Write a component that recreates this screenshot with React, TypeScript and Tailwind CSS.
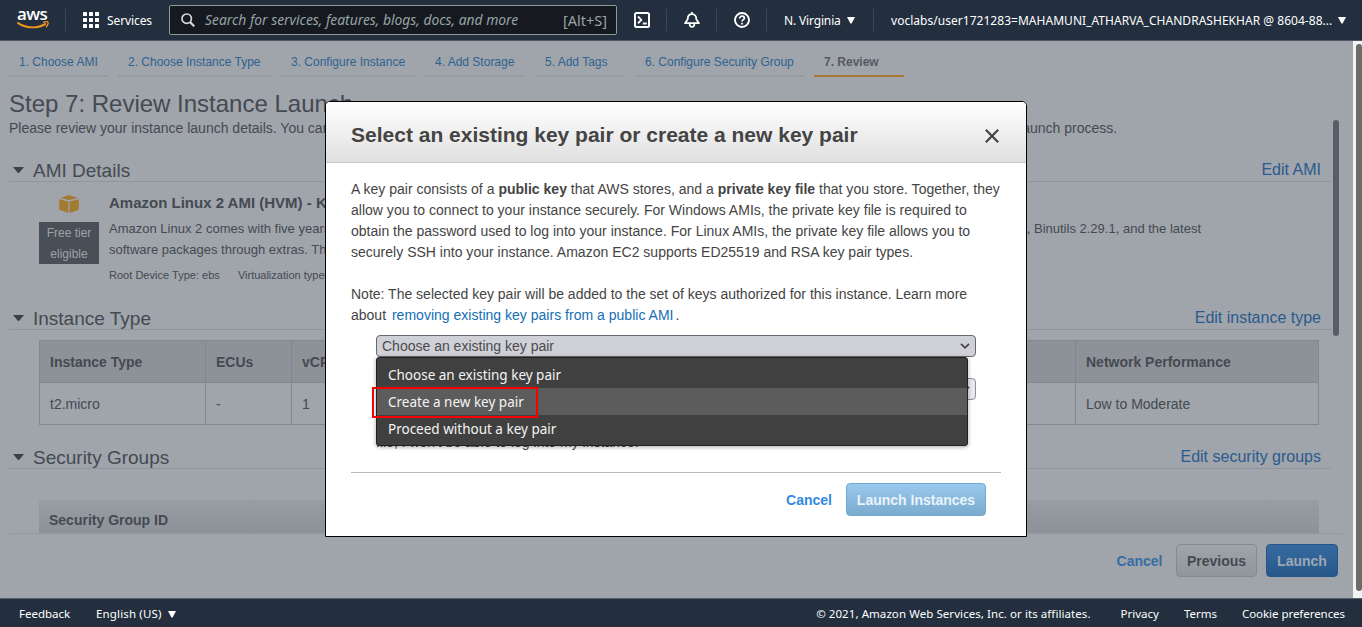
import type { ReactNode } from 'react';

const tabs = [
  { label: '1. Choose AMI', width: 'w-[99px]' },
  { label: '2. Choose Instance Type', width: 'w-[153px]' },
  { label: '3. Configure Instance', width: 'w-[134px]' },
  { label: '4. Add Storage', width: 'w-[100px]' },
  { label: '5. Add Tags', width: 'w-[90px]' },
  { label: '6. Configure Security Group', width: 'w-[169px]' },
];

const columns = [
  { head: 'Instance Type', value: 't2.micro', width: 'w-[166px]' },
  { head: 'ECUs', value: '-', width: 'w-[86px]' },
  { head: 'vCPUs', value: '1', width: 'w-[97px]' },
  { head: 'Memory (GiB)', value: '1', width: 'w-[143px]' },
  { head: 'Instance Storage (GB)', value: 'EBS only', width: 'w-[272px]' },
  { head: 'EBS-Optimized Available', value: '-', width: 'w-[272px]' },
  { head: 'Network Performance', value: 'Low to Moderate', width: 'w-[243px]' },
];

function Caret() {
  return (
    <svg width="8" height="7" viewBox="0 0 8 7" className="shrink-0">
      <path d="M0 0h8L4.6 6.5H3.4z" fill="#fff" />
    </svg>
  );
}

function Divider() {
  return <span className="h-[22px] w-px shrink-0 bg-[#3d4652]" />;
}

function Logo() {
  return (
    <div className="relative h-[22px] w-8 shrink-0">
      <span className="absolute -top-[6px] left-0 font-['Open_Sans',sans-serif] text-[17px] leading-[22px] font-semibold tracking-[-0.6px] text-white">
        aws
      </span>
      <svg width="32" height="22" viewBox="0 0 32 22" className="absolute top-0 left-0" fill="none">
        <path d="M.4 13.6c8.200 6 20.200 6.400 28.500 1" stroke="#f7981f" strokeWidth="1.9" />
        <path d="M26.2 13.4c2.200-.7 4.300-.7 4.700-.2.400.8-.3 3.300-1.800 5" stroke="#f7981f" strokeWidth="1.3" />
      </svg>
    </div>
  );
}

function TopBar() {
  return (
    <header className="flex h-[41px] shrink-0 items-center border-b border-[#4d5763] bg-[#232f3e] font-['Noto_Sans',sans-serif] text-[12px] whitespace-nowrap text-white">
      <div className="flex w-[65px] shrink-0 pl-[17px]">
        <Logo />
      </div>
      <Divider />
      <div className="flex w-[103px] shrink-0 items-center pl-[17px]">
        <svg width="16" height="16" viewBox="0 0 16 16" fill="#fff" className="mr-2 shrink-0">
          {[0, 6, 12].map((y) => [0, 6, 12].map((x) => <rect key={`${x}-${y}`} x={x} y={y} width="4" height="4" rx=".5" />))}
        </svg>
        <span className="mt-[2px] tracking-[-0.1px]">Services</span>
      </div>
      <div className="flex h-[30px] w-[448px] shrink-0 items-center rounded-[2px] border border-[#8d9a9b] bg-[#16191f] pr-[9px] pl-[11px] text-[#95a5a6]">
        <svg width="14" height="14" viewBox="0 0 14 14" fill="none" stroke="#d5dbdb" strokeWidth="1.7">
          <circle cx="5.7" cy="5.7" r="4.7" />
          <path d="m9 9 4.3 4.3" strokeWidth="2.2" />
        </svg>
        <span className="mt-px ml-[10px] grow text-[13.85px] italic">Search for services, features, blogs, docs, and more</span>
        <span className="mt-px text-[14.5px]">[Alt+S]</span>
      </div>
      <div className="flex w-[49px] shrink-0 pl-[17px]">
        <svg width="16" height="16" viewBox="0 0 16 16" fill="none" stroke="#fff" strokeWidth="2">
          <rect x="1" y="1" width="14" height="14" rx="1.5" />
          <path d="m4 4.5 3.3 3.4L4 11.3M8.8 11.5h4" strokeWidth="1.8" />
        </svg>
      </div>
      <Divider />
      <div className="flex w-[49px] shrink-0 pl-[17px]">
        <svg width="16" height="16" viewBox="0 0 16 16" fill="none" stroke="#fff" strokeWidth="1.8" strokeLinejoin="round">
          <path d="M8 0v2" />
          <path d="M3.700 7.200C3.700 4 5.300 2.200 8 2.200s4.300 1.800 4.300 5l2.600 4H1.100z" />
          <path d="M5.600 11.500c0 2.200.9 3.500 2.400 3.500s2.400-1.300 2.400-3.500" strokeWidth="1.700" />
        </svg>
      </div>
      <Divider />
      <div className="flex w-[49px] shrink-0 pl-[17px]">
        <svg width="16" height="16" viewBox="0 0 16 16" fill="none" stroke="#fff" strokeWidth="1.9">
          <circle cx="8" cy="8" r="7" />
          <path d="M5.700 6.500C5.700 5 6.700 4.200 8 4.200s2.400.8 2.400 2.100C10.400 7.700 8 7.700 8 9.600M8 10.700v1.800" strokeWidth="1.700" />
        </svg>
      </div>
      <Divider />
      <div className="flex w-[106px] shrink-0 items-center gap-[6px] pl-[17px]">
        <span className="mt-[2px] w-[57px] tracking-[-0.15px]">N. Virginia</span>
        <Caret />
      </div>
      <Divider />
      <div className="flex shrink-0 items-center gap-[6px] pl-[17px]">
        <span className="mt-[2px] w-[441px] tracking-[0.03px]">voclabs/user1721283=MAHAMUNI_ATHARVA_CHANDRASHEKHAR @ 8604-88...</span>
        <Caret />
      </div>
    </header>
  );
}

function SectionHeading({ title, action }: { title: string; action: string }) {
  return (
    <div className="flex h-6 w-[1322px] shrink-0 items-start border-b border-[#90959d] pr-[10px]">
      <svg width="11" height="6" viewBox="0 0 11 6" className="mt-[9px] mr-[9px] ml-1">
        <path d="M0 0h11L6 6H5z" fill="#3b4148" />
      </svg>
      <h2 className="grow pt-px text-[19px] leading-6">{title}</h2>
      <a className="pt-px text-[16px] leading-[22px] text-[#2a5b8e]">{action}</a>
    </div>
  );
}

function AmiDetails() {
  return (
    <div className="flex h-[124px] shrink-0 pl-[30px]">
      <div className="flex w-[60px] shrink-0 flex-col items-center pt-[13px]">
        <svg width="20" height="18" viewBox="0 0 20 18" fill="#a37b30">
          <path d="m1.500 2.900 8.500-2.800 8.500 2.800L10 5z" />
          <path d="m.2 4.200 9.200 2.200V18L.2 14.800zM19.800 4.200l-9.200 2.200V18l9.200-3.200z" />
        </svg>
        <div className="mt-[9px] h-[42px] w-[60px] bg-[#494f56] pt-px text-center text-[12px] leading-[21px] text-[#9da2a9]">
          Free tier eligible
        </div>
      </div>
      <div className="pt-[11px] pl-[10px] whitespace-nowrap">
        <h3 className="text-[15px] leading-5 font-bold">Amazon Linux 2 AMI (HVM) - Kernel 4.14, SSD Volume Type</h3>
        <p className="mt-[5px] text-[13px] leading-[21px] tracking-[0.005px]">
          Amazon Linux 2 comes with five years support. It provides Linux kernel 4.14 tuned for optimal performance on Amazon EC2,
          systemd 219, GCC 7.3, Glibc 2.26, Binutils 2.29.1, and the latest
          <br />
          software packages through extras. This AMI is the successor of the Amazon Linux AMI.
        </p>
        <p className="mt-[5px] flex gap-[18px] text-[11px] leading-5">
          <span className="tracking-[0.02px]">Root Device Type: ebs</span>
          <span>Virtualization type: hvm</span>
        </p>
      </div>
    </div>
  );
}

function InstanceTable() {
  return (
    <div className="mt-[10px] ml-[30px] flex h-[85px] w-[1280px] shrink-0 border-y border-l border-[#838890] text-[14px]">
      {columns.map((c) => (
        <div key={c.head} className={`${c.width} shrink-0 border-r border-[#838890] whitespace-nowrap`}>
          <div className="h-[42px] border-b border-[#838890] bg-[#8d9299] pl-[10px] leading-[42px] font-bold">{c.head}</div>
          <div className="pl-[10px] leading-[42px]">{c.value}</div>
        </div>
      ))}
    </div>
  );
}

function ReviewPage() {
  return (
    <main className="flex min-h-0 grow bg-[#a0a4ab] text-[#444a51]">
      <div className="flex w-[1353px] shrink-0 flex-col pt-[11px] pl-[9px]">
        <nav className="flex shrink-0 gap-[10px] text-[12px] leading-5 whitespace-nowrap text-[#2f638f]">
          {tabs.map((t) => (
            <a key={t.label} className={`${t.width} h-[25px] border-b-2 border-[#969aa3] pl-[10px]`}>
              {t.label}
            </a>
          ))}
          <a className="h-[25px] w-[90px] border-b-2 border-[#a97a34] pl-[10px] font-bold text-[#555a61]">7. Review</a>
        </nav>
        <h1 className="mt-[13px] shrink-0 text-[24px] leading-7">Step 7: Review Instance Launch</h1>
        <div className="flex h-[416px] w-[1334px] shrink-0 border-b border-[#949aa1]">
          <div className="flex w-[1324px] flex-col overflow-hidden">
            <p className="mb-5 text-[14px] leading-5 whitespace-nowrap">
              Please review your instance launch details. You can go back to edit changes for each section. Click <b>Launch</b> to
              assign a key pair to your instance and complete the launch process.
            </p>
            <SectionHeading title="AMI Details" action="Edit AMI" />
            <AmiDetails />
            <SectionHeading title="Instance Type" action="Edit instance type" />
            <InstanceTable />
            <div className="h-5 shrink-0" />
            <SectionHeading title="Security Groups" action="Edit security groups" />
            <div className="mt-[31px] ml-[30px] h-[33px] w-[1280px] shrink-0 bg-linear-to-b from-[#989da4] to-[#8d9299] pt-[10px] pl-[10px] text-[14px] leading-5 font-bold">
              Security Group ID
            </div>
          </div>
          <div className="mt-[2px] h-[216px] w-[6px] rounded-full bg-[#585d66]" />
        </div>
        <div className="mt-[10px] flex h-[33px] justify-end pr-[15px] text-[14px] leading-[33px] font-bold">
          <a className="mr-[13.500px] pt-px text-[#366da3]">Cancel</a>
          <button className="mr-[9px] w-[81px] rounded-[4px] border border-[#858a92] bg-linear-to-b from-[#9fa4ab] to-[#91969d] leading-[32px]">
            Previous
          </button>
          <button className="w-[72px] rounded-[4px] border border-[#275486] bg-linear-to-b from-[#366a9e] to-[#28588b] leading-[32px] text-[#9da8b5]">
            Launch
          </button>
        </div>
      </div>
      <div className="w-[9px] shrink-0 bg-[#f2f3f4] pt-[3px] pl-[3px]">
        <div className="h-[547px] w-[6px] rounded-full bg-[#6b6b6b]" />
      </div>
    </main>
  );
}

function Option({ children, active = false }: { children: ReactNode; active?: boolean }) {
  return <li className={`h-[27px] pt-px pl-[11px] leading-[27px] ${active ? 'bg-[#5c5c5c]' : ''}`}>{children}</li>;
}

function KeyPairDialog() {
  return (
    <section className="absolute top-[101px] left-[325px] flex h-[436px] w-[702px] flex-col overflow-hidden rounded-t-[5px] border border-black bg-white text-[#444]">
      <div className="flex h-[61px] shrink-0 items-center justify-between border-b border-[#c8c8c8] bg-linear-to-b from-white to-[#e0e0e0] pr-[28px] pl-[25px]">
        <h2 className="mt-[5px] text-[21px] leading-7 font-bold whitespace-nowrap">Select an existing key pair or create a new key pair</h2>
        <svg width="14" height="14" viewBox="0 0 14 14" className="mt-[7px] -mr-px" stroke="#444" strokeWidth="2.2">
          <path d="m.8.8 12.400 12.400M13.200.8.8 13.200" />
        </svg>
      </div>
      <div className="shrink-0 px-[25px] pt-4 text-[14px] leading-[21px] whitespace-nowrap">
        <p className="tracking-[0.012px]">
          A key pair consists of a <b>public key</b> that AWS stores, and a <b>private key file</b> that you store. Together, they
          <br />
          allow you to connect to your instance securely. For Windows AMIs, the private key file is required to
          <br />
          obtain the password used to log into your instance. For Linux AMIs, the private key file allows you to
          <br />
          securely SSH into your instance. Amazon EC2 supports ED25519 and RSA key pair types.
        </p>
        <p className="mt-[21px]">
          Note: The selected key pair will be added to the set of keys authorized for this instance. Learn more
          <br />
          about <a className="mr-[2px] ml-[2px] tracking-[0.015px] text-[#146eb4]">removing existing key pairs from a public AMI</a>.
        </p>
        <div className="relative mt-[9px] ml-[25px] w-[600px]">
          <div className="flex h-[22px] items-center justify-between rounded-[4px] border border-[#676774] bg-[#d0d0d7] pr-[5px] pl-[5px] text-[#4b4b4f]">
            <span>Choose an existing key pair</span>
            <svg width="10" height="6" viewBox="0 0 10 6" fill="none" stroke="#444" strokeWidth="1.700">
              <path d="m1 .8 4 4 4-4" />
            </svg>
          </div>
          <div className="mt-[21px] flex h-[22px] items-center justify-end rounded-[4px] border border-[#8f8f9d] bg-[#e9e9ed] pr-[5px]">
            <svg width="10" height="6" viewBox="0 0 10 6" fill="none" stroke="#444" strokeWidth="1.700">
              <path d="m1 .8 4 4 4-4" />
            </svg>
          </div>
          <p className="mt-8">file, I won't be able to log into my instance.</p>
          <ul className="absolute top-[22px] left-0 h-[89px] w-[592px] rounded-[3px] border border-[#222] bg-[#404040] pt-[3px] font-['Noto_Sans',sans-serif] text-[13.5px] text-[#f4f4f4] shadow-[0_1px_4px_rgba(0,0,0,0.35)]">
            <Option>Choose an existing key pair</Option>
            <Option active>Create a new key pair</Option>
            <Option>Proceed without a key pair</Option>
          </ul>
          <div className="absolute top-[52px] -left-1 h-[31px] w-[166px] border-2 border-[#f60000]" />
        </div>
      </div>
      <div className="mx-[25px] mt-auto flex h-[64px] shrink-0 items-start justify-end border-t border-[#b9b9b9] pt-[10px] pr-[15px] text-[14px] leading-[33px] font-bold">
        <a className="mr-[14px] pt-px text-[#318ae0]">Cancel</a>
        <button className="h-[33px] w-[140px] rounded-[4px] border border-[#75a8cc] bg-linear-to-b from-[#99c9ee] to-[#7aaacd] leading-[32px] text-[#e9f3fa]">
          Launch Instances
        </button>
      </div>
    </section>
  );
}

function Footer() {
  return (
    <footer className="flex h-[29px] shrink-0 items-center border-t border-[#59616c] bg-[#232f3e] pt-[2px] pr-[17px] pl-[19px] font-['Noto_Sans',sans-serif] text-[11.500px] whitespace-nowrap text-white">
      <a className="w-[77px]">Feedback</a>
      <a className="mr-[5px] w-[67px] tracking-[0.15px]">English (US)</a>
      <Caret />
      <span className="ml-auto tracking-[0.07px]">© 2021, Amazon Web Services, Inc. or its affiliates.</span>
      <a className="ml-[30px]">Privacy</a>
      <a className="ml-[25px]">Terms</a>
      <a className="ml-[25px] tracking-[-0.05px]">Cookie preferences</a>
    </footer>
  );
}

export default function App() {
  return (
    <div className="relative flex h-[627px] w-[1362px] flex-col overflow-hidden font-['Liberation_Sans',Arial,sans-serif]">
      <TopBar />
      <ReviewPage />
      <Footer />
      <KeyPairDialog />
    </div>
  );
}
